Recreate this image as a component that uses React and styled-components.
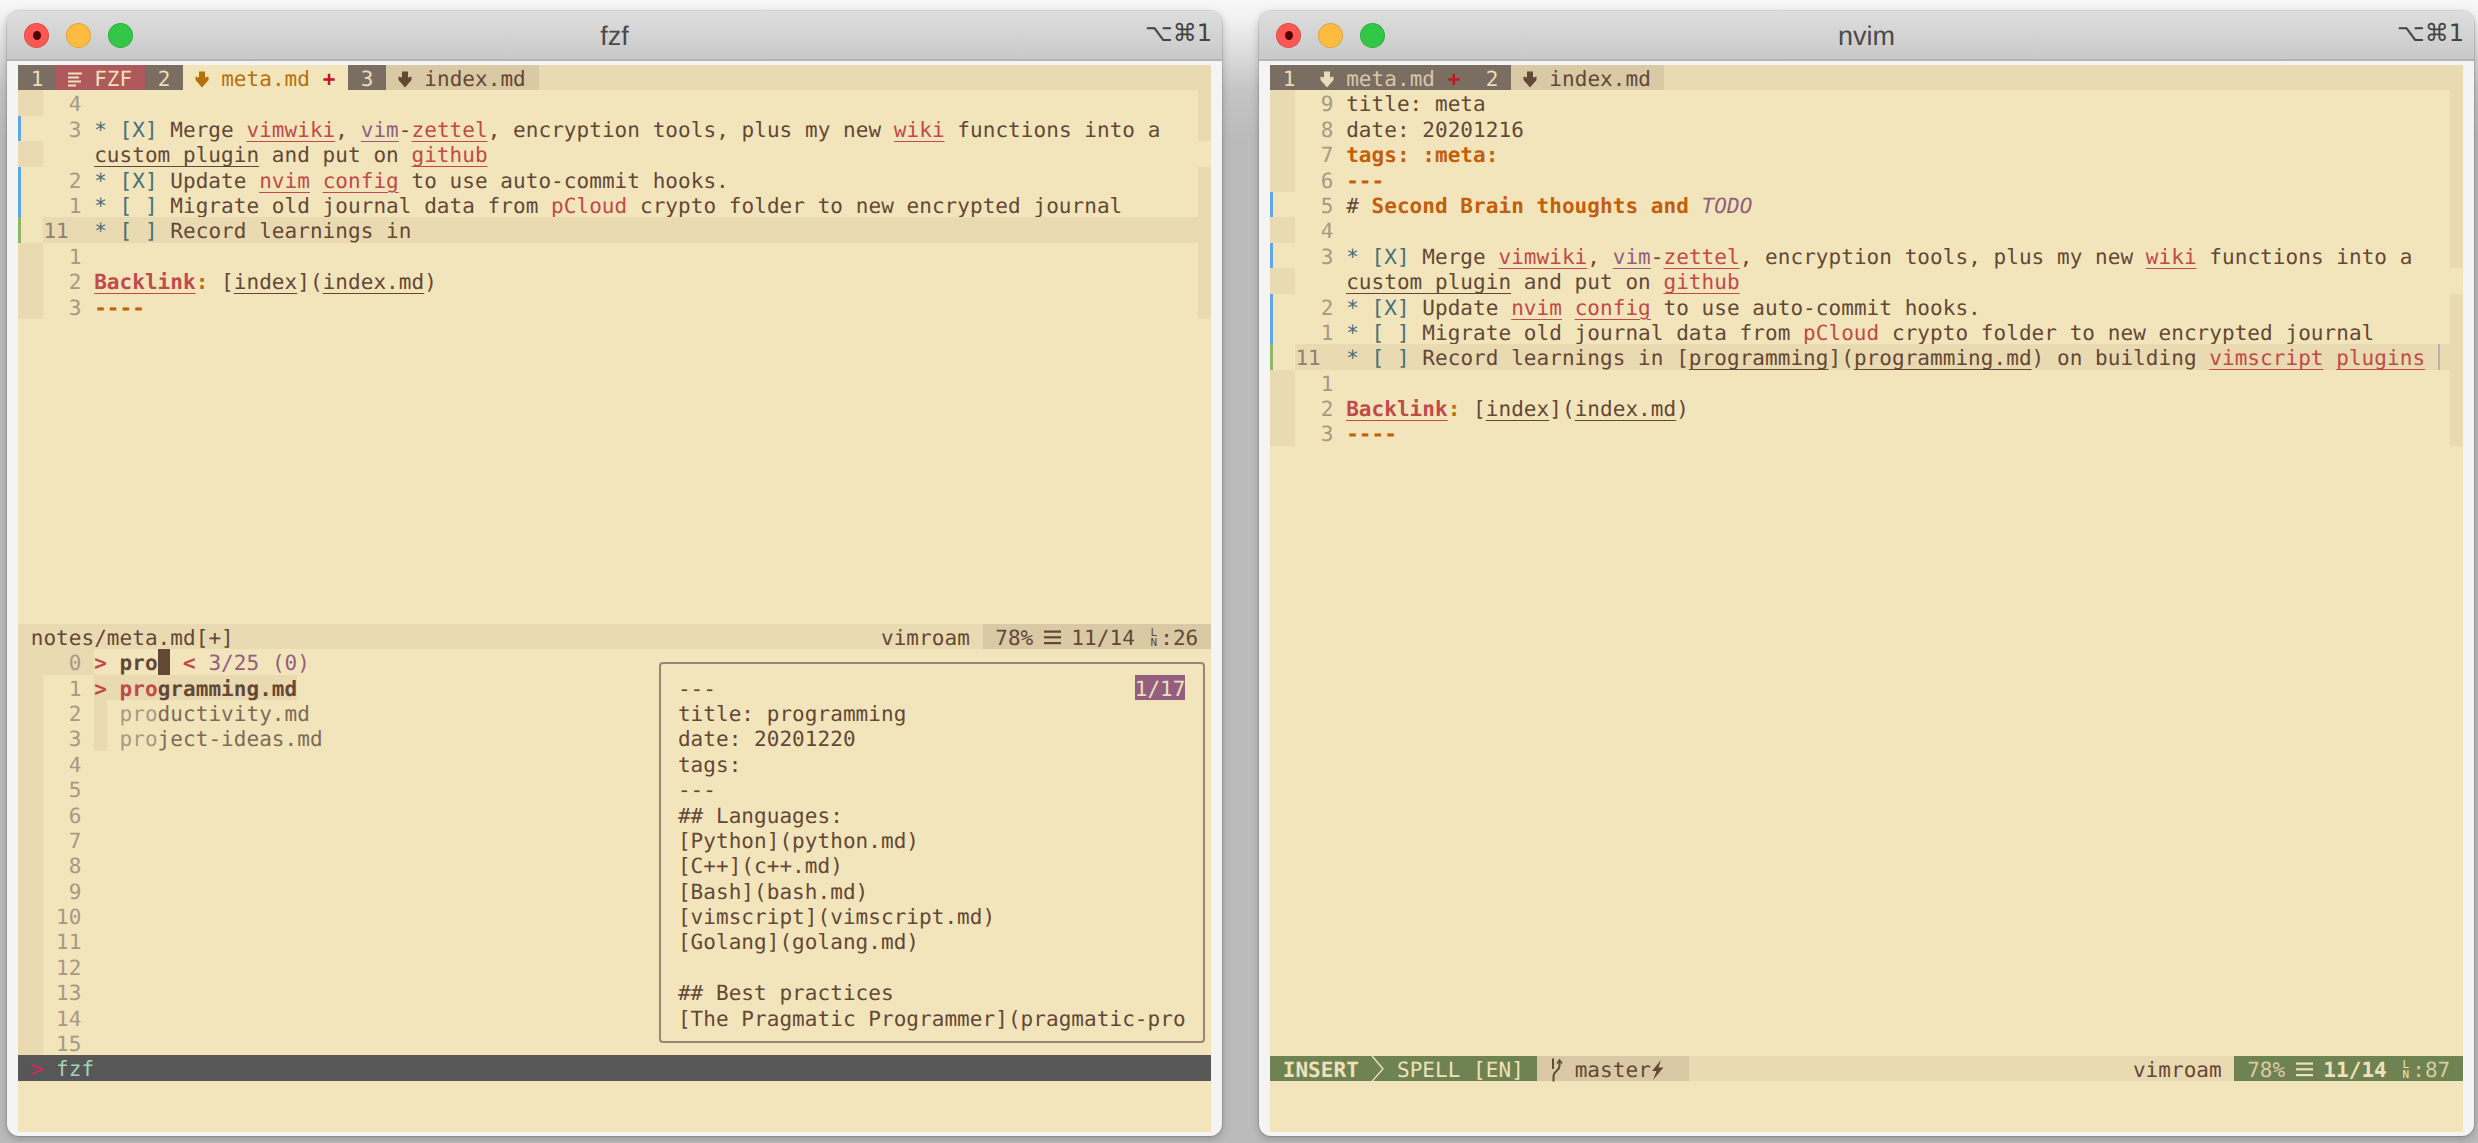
import React from 'react';
import styled, { createGlobalStyle } from 'styled-components';

const CW = 12.69;
const RH = 25.4;
const LINE = RH + 3; // cell text sits a little under the middle of its row

const c = {
  bg: '#f2e5bc',
  dim: '#eadab2',
  tab: '#dac9a5',
  dark: '#7a6d62',
  fg: '#654735',
  num: '#a89984',
  red: '#c14a4a',
  orange: '#c35e0a',
  yellow: '#b47109',
  blue: '#45707a',
  purple: '#945e80',
  green: '#6f8352',
};

const GlobalStyle = createGlobalStyle`
  html, body {
    margin: 0;
    height: 100%;
    overflow: hidden;
  }
  body {
    font-family: "DejaVu Sans Mono", "Liberation Mono", monospace;
    text-rendering: geometricPrecision;
    font-kerning: none;
    font-variant-ligatures: none;
  }
`;

const Desktop = styled.div`
  width: 2478px;
  height: 1143px;
  box-sizing: border-box;
  padding: 11px 4px 0 7px;
  display: flex;
  gap: 37px;
  align-items: flex-start;
  background: linear-gradient(#f7f7f7 0, #f1f1f1 20px, #c4c4c4 90px, #bbbbbb 140px, #bbbbbb 100%);
`;

const Window = styled.div`
  width: 1215px;
  box-sizing: border-box;
  display: flex;
  flex-direction: column;
  background: #f4f4f4;
  border-radius: 12px;
  overflow: hidden;
  box-shadow: 0 0 0 1px rgba(0, 0, 0, 0.1), 0 3px 8px rgba(0, 0, 0, 0.22);
`;

const TitleBar = styled.div`
  height: 50px;
  box-sizing: border-box;
  display: grid;
  grid-template-columns: 1fr auto 1fr;
  align-items: center;
  background: linear-gradient(#dedede, #c9c9c9);
  border-bottom: 2px solid #b4b4b4;
  color: #4a4a4a;
`;

const Lights = styled.div`
  display: flex;
  gap: 17px;
  padding-left: 17px;
`;

const Light = styled.span`
  width: 25px;
  height: 25px;
  box-sizing: border-box;
  border-radius: 50%;
  display: flex;
  align-items: center;
  justify-content: center;
  background: ${p => p.$color};
  border: 1px solid rgba(0, 0, 0, 0.12);

  &::after {
    content: '';
    display: ${p => (p.$dot ? 'block' : 'none')};
    width: 8px;
    height: 9px;
    border-radius: 50%;
    background: #4d0505;
  }
`;

const Title = styled.div`
  font-family: "Liberation Sans", Arial, sans-serif;
  font-size: 27px;
  padding-top: 2px;
`;

const Shortcut = styled.div`
  justify-self: end;
  padding-right: 10px;
  margin-top: -4px;
  font-family: "DejaVu Sans", sans-serif;
  font-size: 24px;
  color: #444;
`;

const Body = styled.div`
  padding: 4px 11px;
`;

const Screen = styled.div`
  height: ${42 * RH}px;
  display: flex;
  flex-direction: column;
  background: ${c.bg};
  color: ${c.fg};
  font-size: 21px;
  letter-spacing: 0.05px;
  line-height: ${LINE}px;
  white-space: pre;
`;

const TabLine = styled.div`
  height: ${RH}px;
  flex: none;
  display: flex;
  background: ${c.dim};
`;

const tabTones = {
  number: `background: ${c.dark}; color: #eadcb6;`,
  fzf: 'background: #ae5a5c; color: #f2dfb8;',
  active: `background: ${c.bg}; color: ${c.yellow};`,
  idle: `background: ${c.tab}; color: ${c.fg};`,
};

const Tab = styled.div`
  height: ${RH}px;
  ${p => tabTones[p.$tone]}
`;

const Modified = styled.span`
  color: #c4161c;
  font-weight: 700;
`;

const Muted = styled.span`
  color: #d8c8a6;
`;

const Glyph = styled.span`
  display: inline-flex;
  width: ${CW}px;
  height: ${LINE}px;
  align-items: center;
  justify-content: center;
  vertical-align: top;
  overflow: visible;

  svg {
    flex: none;
    overflow: visible;
  }
`;

const MarkdownIcon = () => (
  <Glyph>
    <svg width="14" height="19" viewBox="0 0 14 19" fill="currentColor">
      <path d="M4 1.5h6v6l3.5-1v3.5L7 17.5 .5 10V6.5L4 7.5z" />
    </svg>
  </Glyph>
);

const ListIcon = () => (
  <Glyph>
    <svg width="14" height="15" viewBox="0 0 14 15" fill="currentColor">
      <rect x="0" y="0.5" width="14" height="2" />
      <rect x="0" y="4.5" width="11" height="2" />
      <rect x="0" y="8.5" width="13" height="2" />
      <rect x="0" y="12.5" width="8" height="2" />
    </svg>
  </Glyph>
);

const BranchIcon = () => (
  <Glyph>
    <svg width="12" height="25" viewBox="0 0 12 25" fill="none" stroke="currentColor" strokeWidth="2">
      <path d="M3 1.5V12" />
      <path d="M9.5 4v5c0 5-6 5-6 10v5.5" />
      <path d="M7 6.5l2.5-3.5L12 6.5" strokeWidth="1.5" />
    </svg>
  </Glyph>
);

const BoltIcon = () => (
  <Glyph>
    <svg width="13" height="20" viewBox="0 0 13 20" fill="currentColor">
      <path d="M10 0L1 11h4.5L2 20l10.5-12.5H7.5z" />
    </svg>
  </Glyph>
);

const MenuIcon = () => (
  <Glyph>
    <svg width="17" height="15" viewBox="0 0 17 15" fill="currentColor">
      <rect y="0.5" width="17" height="2.2" />
      <rect y="6.2" width="17" height="2.2" />
      <rect y="12" width="17" height="2.2" />
    </svg>
  </Glyph>
);

const ChevronGlyph = styled(Glyph)`
  align-items: flex-start;
`;

const ChevronIcon = () => (
  <ChevronGlyph>
    <svg width="14" height={RH} viewBox="0 0 14 25.4" fill="none" stroke="currentColor" strokeWidth="1.4">
      <path d="M1 0l11 12.7L1 25.4" />
    </svg>
  </ChevronGlyph>
);

const LineNoGlyph = styled(Glyph)`
  flex-direction: column;
  font-size: 11px;
  line-height: 10px;
  letter-spacing: 0;
`;

const LineNo = () => (
  <LineNoGlyph>
    <span>L</span>
    <span>N</span>
  </LineNoGlyph>
);

const Row = styled.div`
  height: ${RH}px;
  flex: none;
  display: flex;
`;

const signStyles = {
  fill: `background: ${c.dim};`,
  change: 'box-shadow: inset 3px 0 0 #5ea8e6;',
  add: 'box-shadow: inset 3px 0 0 #8fb56b;',
};

const Sign = styled.div`
  width: ${2 * CW}px;
  flex: none;
  ${p => signStyles[p.$kind] || ''}
`;

const RowBody = styled.div`
  flex: 1;
  min-width: 0;
  display: flex;
  background: ${p => (p.$current ? c.dim : 'transparent')};
`;

const Num = styled.div`
  width: ${4 * CW}px;
  flex: none;
  box-sizing: border-box;
  text-align: ${p => (p.$current ? 'left' : 'right')};
  padding-right: ${p => (p.$current ? 0 : CW)}px;
  color: ${p => (p.$current ? '#8f8172' : c.num)};
  background: ${p => (p.$hl ? c.dim : 'transparent')};
`;

const Text = styled.div`
  flex: 1;
  min-width: 0;
`;

const Strip = styled.div`
  width: ${CW}px;
  flex: none;
  background: ${p => (p.$on ? c.dim : 'transparent')};
`;

const Bullet = styled.span`
  color: ${c.blue};
`;

const Wiki = styled.span`
  color: ${c.red};
  text-decoration: underline;
  text-decoration-thickness: 1px;
  text-underline-offset: 4px;
`;

const WikiAlt = styled(Wiki)`
  color: ${c.purple};
`;

const Link = styled.span`
  text-decoration: underline;
  text-decoration-thickness: 1px;
  text-underline-offset: 4px;
`;

const Strong = styled.span`
  color: ${c.orange};
  font-weight: 700;
`;

const Todo = styled.span`
  color: ${c.purple};
  font-style: italic;
`;

const Backlink = styled(Wiki)`
  font-weight: 700;
`;

const Colon = styled.span`
  color: ${c.yellow};
  font-weight: 700;
`;

const Beam = styled.span`
  display: inline-block;
  width: 2px;
  height: ${RH}px;
  vertical-align: top;
  background: #b5b5ac;
`;

const Line = ({ n, sign = 'fill', current, strip = true, children }) => (
  <Row>
    <Sign $kind={sign} />
    <RowBody $current={current}>
      <Num $current={current}>{n}</Num>
      <Text>{children}</Text>
      <Strip $on={strip} />
    </RowBody>
  </Row>
);

const Pane = styled.div`
  flex: none;
  height: ${p => p.$rows * RH}px;
`;

const StatusBar = styled.div`
  height: ${RH}px;
  flex: none;
  display: flex;
  justify-content: space-between;
  background: ${c.dim};
`;

const StatusGroup = styled.div`
  display: flex;
`;

const StatusBlock = styled.div`
  height: ${RH}px;
  background: ${p => (p.$green ? c.green : p.$tab ? c.tab : 'transparent')};
  color: ${p => (p.$green ? '#efe2ba' : c.fg)};
`;

const Faded = styled.span`
  color: #d9cba0;
`;

const Bold = styled.span`
  font-weight: 700;
`;

const Terminal = styled.div`
  position: relative;
  flex: none;
`;

const Marker = styled.span`
  color: ${c.red};
  font-weight: 700;
`;

const Query = styled.span`
  font-weight: 700;
`;

const Cursor = styled.span`
  display: inline-block;
  width: ${CW}px;
  height: ${RH}px;
  vertical-align: top;
  background: ${c.fg};
`;

const Counter = styled.span`
  color: ${c.purple};
`;

const Selected = styled.span`
  display: inline-block;
  height: ${RH}px;
  vertical-align: top;
  background: ${c.dim};
  font-weight: 700;
`;

const Match = styled.span`
  color: ${c.red};
`;

const Gutter = styled.span`
  display: inline-block;
  width: ${CW}px;
  height: ${RH}px;
  vertical-align: top;
  background: ${c.dim};
`;

const Hit = styled.span`
  color: ${c.num};
`;

const Rest = styled.span`
  color: #7f6a58;
`;

const Preview = styled.div`
  position: absolute;
  left: ${50.5 * CW}px;
  top: ${RH / 2}px;
  width: ${43 * CW}px;
  height: ${15 * RH}px;
  box-sizing: border-box;
  padding: ${RH / 2 - 2}px 0 0 ${1.5 * CW - 2}px;
  border: 2px solid #968675;
  border-radius: 4px;
  background: ${c.bg};
`;

const PreviewLine = styled.div`
  width: fit-content;
  min-height: ${RH}px;
  height: ${RH}px;
`;

const PreviewBadge = styled.span`
  position: absolute;
  top: ${RH / 2 - 2}px;
  right: ${1.5 * CW - 2}px;
  height: ${RH}px;
  background: ${c.purple};
  color: #efe0ba;
`;

const ShellBar = styled.div`
  height: ${RH}px;
  flex: none;
  background: #575757;
  color: #a3d2b5;
`;

const Prompt = styled.span`
  color: #d7245f;
`;

const TerminalTitle = ({ title }) => (
  <TitleBar>
    <Lights>
      <Light $color="#fc5753" $dot />
      <Light $color="#fdbc40" />
      <Light $color="#33c748" />
    </Lights>
    <Title>{title}</Title>
    <Shortcut>⌥⌘1</Shortcut>
  </TitleBar>
);

const previewLines = [
  '---',
  'title: programming',
  'date: 20201220',
  'tags:',
  '---',
  '## Languages:',
  '[Python](python.md)',
  '[C++](c++.md)',
  '[Bash](bash.md)',
  '[vimscript](vimscript.md)',
  '[Golang](golang.md)',
  '',
  '## Best practices',
  '[The Pragmatic Programmer](pragmatic-pro',
];

const emptyNumbers = [4, 5, 6, 7, 8, 9, 10, 11, 12, 13, 14, 15];

const NoteBody = ({ record }) => (
  <>
    <Line n={4} />
    <Line n={3} sign="change">
      <Bullet>* [X]</Bullet> Merge <Wiki>vimwiki</Wiki>, <WikiAlt>vim</WikiAlt>-<Wiki>zettel</Wiki>, encryption tools, plus my new <Wiki>wiki</Wiki> functions into a
    </Line>
    <Line strip={false}><Link>custom plugin</Link> and put on <Wiki>github</Wiki></Line>
    <Line n={2} sign="change"><Bullet>* [X]</Bullet> Update <Wiki>nvim</Wiki> <Wiki>config</Wiki> to use auto-commit hooks.</Line>
    <Line n={1} sign="change"><Bullet>* [ ]</Bullet> Migrate old journal data from <Wiki>pCloud</Wiki> crypto folder to new encrypted journal</Line>
    <Line n={11} sign="add" current><Bullet>* [ ]</Bullet> {record}</Line>
    <Line n={1} />
    <Line n={2}><Backlink>Backlink</Backlink><Colon>:</Colon> [<Link>index</Link>](<Link>index.md</Link>)</Line>
    <Line n={3}><Strong>----</Strong></Line>
  </>
);

const FzfWindow = () => (
  <Window>
    <TerminalTitle title="fzf" />
    <Body>
      <Screen>
        <TabLine>
          <Tab $tone="number"> 1 </Tab>
          <Tab $tone="fzf"> <ListIcon /> FZF </Tab>
          <Tab $tone="number"> 2 </Tab>
          <Tab $tone="active"> <MarkdownIcon /> meta.md <Modified>+</Modified> </Tab>
          <Tab $tone="number"> 3 </Tab>
          <Tab $tone="idle"> <MarkdownIcon /> index.md </Tab>
        </TabLine>
        <Pane $rows={21}>
          <NoteBody record="Record learnings in" />
        </Pane>
        <StatusBar>
          <StatusGroup> notes/meta.md[+]</StatusGroup>
          <StatusGroup>
            <span>vimroam </span>
            <StatusBlock $tab> 78% <MenuIcon /> 11/14 <LineNo />:26 </StatusBlock>
          </StatusGroup>
        </StatusBar>
        <Terminal>
          <Row>
            <Sign $kind="fill" />
            <Num $hl>0</Num>
            <Text><Marker>&gt;</Marker> <Query>pro</Query><Cursor /> <Marker>&lt;</Marker> <Counter>3/25 (0)</Counter></Text>
          </Row>
          <Row>
            <Sign $kind="fill" />
            <Num>1</Num>
            <Text><Selected><Marker>&gt;</Marker> <Match>pro</Match>gramming.md</Selected></Text>
          </Row>
          <Row>
            <Sign $kind="fill" />
            <Num>2</Num>
            <Text><Gutter /> <Hit>pro</Hit><Rest>ductivity.md</Rest></Text>
          </Row>
          <Row>
            <Sign $kind="fill" />
            <Num>3</Num>
            <Text><Gutter /> <Hit>pro</Hit><Rest>ject-ideas.md</Rest></Text>
          </Row>
          {emptyNumbers.map(n => (
            <Row key={n}>
              <Sign $kind="fill" />
              <Num>{n}</Num>
            </Row>
          ))}
          <Preview>
            {previewLines.map((text, i) => (
              <PreviewLine key={i}>{text}</PreviewLine>
            ))}
            <PreviewBadge>1/17</PreviewBadge>
          </Preview>
        </Terminal>
        <ShellBar> <Prompt>&gt;</Prompt> fzf</ShellBar>
      </Screen>
    </Body>
  </Window>
);

const NvimWindow = () => (
  <Window>
    <TerminalTitle title="nvim" />
    <Body>
      <Screen>
        <TabLine>
          <Tab $tone="number"> 1  <MarkdownIcon /> <Muted>meta.md</Muted> <Modified>+</Modified>  2 </Tab>
          <Tab $tone="idle"> <MarkdownIcon /> index.md </Tab>
        </TabLine>
        <Pane $rows={38}>
          <Line n={9}>title: meta</Line>
          <Line n={8}>date: 20201216</Line>
          <Line n={7}><Strong>tags: :meta:</Strong></Line>
          <Line n={6}><Strong>---</Strong></Line>
          <Line n={5} sign="change"># <Strong>Second Brain thoughts and</Strong> <Todo>TODO</Todo></Line>
          <NoteBody
            record={
              <>
                Record learnings in [<Link>programming</Link>](<Link>programming.md</Link>) on building <Wiki>vimscript</Wiki> <Wiki>plugins</Wiki> <Beam />
              </>
            }
          />
        </Pane>
        <StatusBar>
          <StatusGroup>
            <StatusBlock $green> <Bold>INSERT</Bold> <ChevronIcon /> SPELL [EN] </StatusBlock>
            <StatusBlock $tab> <BranchIcon /> master<BoltIcon />  </StatusBlock>
          </StatusGroup>
          <StatusGroup>
            <span>vimroam </span>
            <StatusBlock $green> <Faded>78%</Faded> <MenuIcon /> <Bold>11/14</Bold> <LineNo /><Faded>:87</Faded> </StatusBlock>
          </StatusGroup>
        </StatusBar>
      </Screen>
    </Body>
  </Window>
);

export default function App() {
  return (
    <>
      <GlobalStyle />
      <Desktop>
        <FzfWindow />
        <NvimWindow />
      </Desktop>
    </>
  );
}
